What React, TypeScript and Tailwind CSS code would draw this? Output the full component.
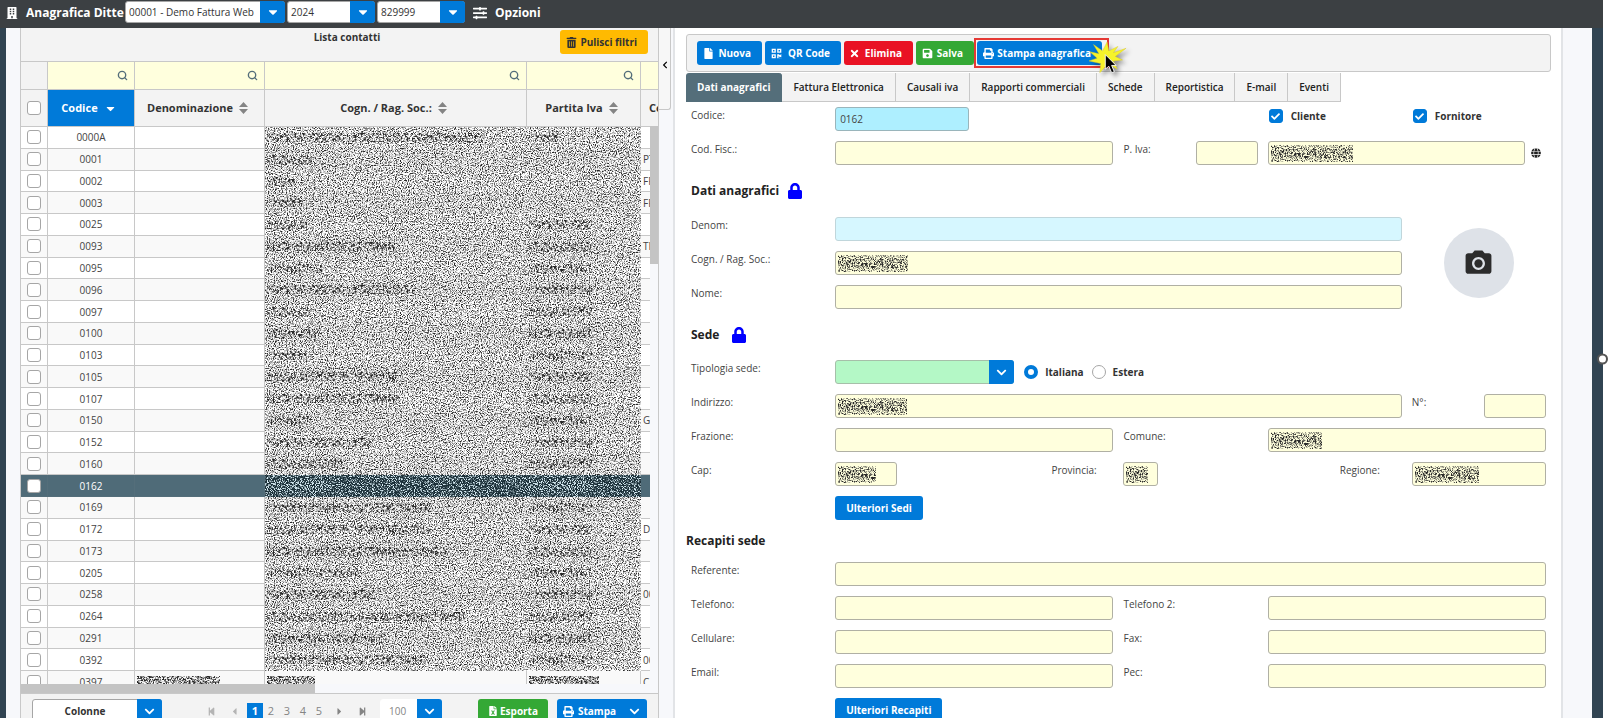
import { useState } from "react";
import type { ReactNode } from "react";
import clsx from "clsx";
import { Search } from "lucide-react";
import {
	FaBuilding,
	FaCaretDown,
	FaCaretLeft,
	FaCaretRight,
	FaCheck,
	FaChevronDown,
	FaChevronLeft,
	FaFile,
	FaFileExcel,
	FaGlobe,
	FaLock,
	FaPrint,
	FaSave,
	FaSlidersH,
	FaStepBackward,
	FaStepForward,
	FaTimes,
	FaTrashAlt,
	FaQrcode,
} from "react-icons/fa";
import { MdPhotoCamera } from "react-icons/md";

type Contact = {
	code: string;
	name: number;
	vat: number;
	extra?: string;
};

// name and vat hold the length of the hidden text
const CONTACTS: Contact[] = [
	{ code: "0000A", name: 215, vat: 30 },
	{ code: "0001", name: 45, vat: 0, extra: "PT" },
	{ code: "0002", name: 28, vat: 0, extra: "FR" },
	{ code: "0003", name: 36, vat: 0, extra: "FR" },
	{ code: "0025", name: 40, vat: 63 },
	{ code: "0093", name: 128, vat: 63, extra: "TN" },
	{ code: "0095", name: 55, vat: 63 },
	{ code: "0096", name: 148, vat: 63 },
	{ code: "0097", name: 43, vat: 63 },
	{ code: "0100", name: 52, vat: 63 },
	{ code: "0103", name: 40, vat: 63 },
	{ code: "0105", name: 130, vat: 63 },
	{ code: "0107", name: 132, vat: 63 },
	{ code: "0150", name: 45, vat: 63, extra: "G" },
	{ code: "0152", name: 104, vat: 63 },
	{ code: "0160", name: 78, vat: 63 },
	{ code: "0162", name: 65, vat: 63 },
	{ code: "0169", name: 165, vat: 63 },
	{ code: "0172", name: 165, vat: 63, extra: "D" },
	{ code: "0173", name: 183, vat: 63 },
	{ code: "0205", name: 95, vat: 63 },
	{ code: "0258", name: 108, vat: 63, extra: "00" },
	{ code: "0264", name: 198, vat: 63 },
	{ code: "0291", name: 120, vat: 63 },
	{ code: "0392", name: 158, vat: 63, extra: "00" },
];

const TABS = [
	"Dati anagrafici",
	"Fattura Elettronica",
	"Causali iva",
	"Rapporti commerciali",
	"Schede",
	"Reportistica",
	"E-mail",
	"Eventi",
];

const SEEDS = [1, 2, 3, 4, 5, 6, 7];

function NoiseFilters() {
	return (
		<svg width="0" height="0" className="absolute" aria-hidden="true">
			<defs>
				{SEEDS.map((seed) => (
					<filter key={seed} id={`grain-${seed}`} x="0" y="0" width="1" height="1" colorInterpolationFilters="sRGB">
						<feTurbulence type="fractalNoise" baseFrequency="0.85" numOctaves="2" seed={seed} />
						<feColorMatrix values="0 0 0 0 0.15  0 0 0 0 0.15  0 0 0 0 0.15  3.6 0 0 0 -1.6" />
					</filter>
				))}
				{SEEDS.map((seed) => (
					<filter key={seed} id={`ink-${seed}`} x="0" y="0" width="1" height="1" colorInterpolationFilters="sRGB">
						<feTurbulence type="fractalNoise" baseFrequency="0.5 0.35" numOctaves="2" seed={seed + 10} />
						<feColorMatrix values="0 0 0 0 0.15  0 0 0 0 0.15  0 0 0 0 0.15  5 0 0 0 -2.55" />
					</filter>
				))}
				<filter id="grain-light" x="0" y="0" width="1" height="1" colorInterpolationFilters="sRGB">
					<feTurbulence type="fractalNoise" baseFrequency="0.85" numOctaves="2" seed="21" />
					<feColorMatrix values="0 0 0 0 0.85  0 0 0 0 0.93  0 0 0 0 0.96  5 0 0 0 -2.35" />
				</filter>
			</defs>
		</svg>
	);
}

function Grain({ seed, ink, light }: { seed: number; ink: number; light?: boolean }) {
	return (
		<svg className="absolute inset-0 h-full w-full" aria-hidden="true">
			<rect width="100%" height="100%" filter={light ? "url(#grain-light)" : `url(#grain-${seed})`} />
			{ink > 0 && <rect x="2" y="6" width={ink} height="9" filter={light ? "url(#grain-light)" : `url(#ink-${seed})`} />}
		</svg>
	);
}

function Tick({ id, label, defaultChecked }: { id: string; label: string; defaultChecked?: boolean }) {
	return (
		<span className="relative flex h-[14px] w-[14px]">
			<input
				id={id}
				type="checkbox"
				aria-label={label}
				defaultChecked={defaultChecked}
				className="peer h-[14px] w-[14px] appearance-none rounded-[3px] border border-[#a6a6a6] bg-white checked:border-[#007ad9] checked:bg-[#007ad9]"
			/>
			<FaCheck size={9} className="pointer-events-none absolute inset-0 m-auto hidden text-white peer-checked:block" />
		</span>
	);
}

function SortIcon() {
	return (
		<svg width="9" height="12" viewBox="0 0 9 12" className="fill-[#848484]" aria-hidden="true">
			<path d="M4.5 0 9 5H0zM4.5 12 0 7h9z" />
		</svg>
	);
}

function TopSelect({ label, value, className }: { label: string; value: string; className: string }) {
	return (
		<div className={clsx("relative h-[22px]", className)}>
			<select
				aria-label={label}
				className="block h-full w-full appearance-none rounded-[3px] border border-[#a6a6a6] bg-white pr-6 pl-[3px] text-[10px] text-[#333333]"
			>
				<option>{value}</option>
			</select>
			<span className="pointer-events-none absolute inset-y-0 right-0 flex w-[25px] items-center justify-center rounded-r-[3px] bg-[#007ad9] text-white">
				<FaCaretDown size={14} />
			</span>
		</div>
	);
}

function PanelSelect({ id, label, value, className, selectClass }: { id?: string; label?: string; value: string; className?: string; selectClass: string }) {
	return (
		<div className={clsx("relative h-6 shrink-0", className)}>
			<select id={id} aria-label={label} className={clsx("block h-full w-full appearance-none rounded-[3px] border pr-6", selectClass)}>
				<option>{value}</option>
			</select>
			<span className="pointer-events-none absolute inset-y-0 right-0 flex w-[25px] items-center justify-center rounded-r-[3px] bg-[#007ad9] text-white">
				<FaChevronDown size={11} />
			</span>
		</div>
	);
}

function ActionButton({ icon, children, className }: { icon: ReactNode; children: ReactNode; className: string }) {
	return (
		<button type="button" className={clsx("flex h-6 shrink-0 items-center justify-between rounded-[3px] text-[10px] font-bold whitespace-nowrap text-white", className)}>
			{icon}
			{children}
		</button>
	);
}

function Label({ htmlFor, children, className }: { htmlFor: string; children: ReactNode; className?: string }) {
	return (
		<label htmlFor={htmlFor} className={clsx("text-[10px] leading-4 text-[#444444]", className ?? "col-span-2")}>
			{children}
		</label>
	);
}

function Field({ id, label, value, hidden, className, tone }: { id: string; label?: string; value?: string; hidden?: number; className: string; tone?: string }) {
	return (
		<div className={clsx("relative h-6", className)}>
			<input
				id={id}
				type="text"
				aria-label={label}
				defaultValue={value}
				className={clsx("block h-full w-full rounded-[3px] border px-1 text-[10px] text-[#444444]", tone ?? "border-[#b0b0a4] bg-[#ffffdd]")}
			/>
			{hidden && (
				<svg width={hidden} height="17" className="absolute top-1 left-[3px]" aria-hidden="true">
					<rect width="100%" height="100%" filter="url(#grain-3)" />
					<rect y="4" width="100%" height="9" filter="url(#ink-3)" />
				</svg>
			)}
		</div>
	);
}

function Heading({ children, lock, className }: { children: ReactNode; lock?: boolean; className: string }) {
	return (
		<h2 className={clsx("col-span-12 flex items-center text-[12px] font-bold text-[#222222]", className)}>
			{children}
			{lock && <FaLock size={16} className="text-[#0000ff]" />}
		</h2>
	);
}

function ContactRow({ contact, index }: { contact: Contact; index: number }) {
	const selected = contact.code === "0162";
	const cell = clsx("border-r border-b p-0", selected ? "border-[#546e7a]" : "border-[#c8c8c8]");
	const hiddenCell = clsx("relative p-0", selected && "bg-[#1b2f38]");

	return (
		<tr className={clsx(selected ? "bg-[#4f6b78] text-white" : index % 2 ? "bg-[#f9f9f9] text-[#444444]" : "bg-white text-[#444444]")}>
			<td className={cell}>
				<div className="flex justify-center">
					<Tick id={`row-${contact.code}`} label={`Seleziona ${contact.code}`} />
				</div>
			</td>
			<td className={clsx(cell, "text-center text-[10px] leading-4")}>{contact.code}</td>
			<td className={cell} />
			<td className={hiddenCell}>
				<Grain seed={(index % 7) + 1} ink={contact.name} light={selected} />
			</td>
			<td className={hiddenCell}>
				<Grain seed={((index + 3) % 7) + 1} ink={contact.vat} light={selected} />
			</td>
			<td className={clsx(cell, "pl-[2px] text-[10px] leading-4")}>{contact.extra}</td>
		</tr>
	);
}

function HiddenText({ width }: { width: number }) {
	return (
		<svg width={width} height="12" className="ml-[2px] block" aria-hidden="true">
			<rect width="100%" height="100%" filter="url(#grain-5)" />
			<rect width="100%" height="100%" filter="url(#ink-5)" />
		</svg>
	);
}

function ContactsPanel() {
	const th = "border-r border-b border-[#c8c8c8] p-0";
	const filters = ["Codice", "Denominazione", "Cognome", "Partita Iva", "Codice fiscale"];

	return (
		<section className="w-[639px] shrink-0 border-x border-[#c8c8c8] bg-[#f3f3f3]">
			<header className="relative flex h-[33px] justify-center pl-[15px]">
				<h2 className="text-[10px] leading-[18px] font-bold text-[#333333]">Lista contatti</h2>
				<button type="button" className="absolute top-[2px] right-[10px] flex h-6 w-[88px] items-center justify-between rounded-[3px] bg-[#ffba01] pr-[11px] pl-[6px] text-[10px] font-bold text-[#333333]">
					<FaTrashAlt size={11} />
					Pulisci filtri
				</button>
			</header>

			<div className="relative overflow-hidden">
				<table className="h-[632px] w-[740px] table-fixed border-separate border-spacing-0 border-t border-[#c8c8c8]">
					<colgroup>
						<col className="w-[27px]" />
						<col className="w-[87px]" />
						<col className="w-[130px]" />
						<col className="w-[262px]" />
						<col className="w-[114px]" />
						<col className="w-[120px]" />
					</colgroup>
					<thead>
						<tr className="h-[28px]">
							<td className={th} />
							{filters.map((name) => (
								<td key={name} className={clsx(th, "bg-[#ffffdd]")}>
									<div className="flex items-center pr-[6px]">
										<input type="text" aria-label={`Filtra ${name}`} className="h-5 min-w-0 flex-1" />
										<Search size={11} strokeWidth={3} className="text-[#546e7a]" />
									</div>
								</td>
							))}
						</tr>
						<tr className="h-[37px] text-[11px] text-[#333333]">
							<th className={th}>
								<div className="flex justify-center">
									<Tick id="row-all" label="Seleziona tutti" />
								</div>
							</th>
							<th className={clsx(th, "bg-[#007ad9] text-white")}>
								<div className="flex items-center justify-center gap-[6px] pr-1">
									Codice
									<FaCaretDown size={13} />
								</div>
							</th>
							<th className={th}>
								<div className="flex items-center justify-center gap-[6px] pr-1">
									Denominazione
									<SortIcon />
								</div>
							</th>
							<th className={th}>
								<div className="flex items-center justify-center gap-[6px] pr-1">
									Cogn. / Rag. Soc.:
									<SortIcon />
								</div>
							</th>
							<th className={th}>
								<div className="flex items-center justify-center gap-[6px] pr-1">
									Partita Iva
									<SortIcon />
								</div>
							</th>
							<th className={clsx(th, "pl-2 text-left")}>Co</th>
						</tr>
					</thead>
					<tbody>
						{CONTACTS.map((contact, i) => (
							<ContactRow key={contact.code} contact={contact} index={i} />
						))}
						<tr className="bg-[#f9f9f9] text-[10px] leading-4 text-[#444444]">
							<td className={th}>
								<div className="flex justify-center">
									<Tick id="row-0397" label="Seleziona 0397" />
								</div>
							</td>
							<td className={clsx(th, "text-center")}>0397</td>
							<td className={th}>
								<HiddenText width={83} />
							</td>
							<td className={th}>
								<HiddenText width={48} />
							</td>
							<td className={th}>
								<HiddenText width={70} />
							</td>
							<td className={clsx(th, "pl-[2px]")}>C</td>
						</tr>
					</tbody>
				</table>

				{/* scrollbars lie over the table */}
				<div className="absolute top-[65px] right-0 bottom-0 w-2 bg-[#f7f8fb]">
					<div className="h-[138px] bg-[#c4c4c4]" />
				</div>
				<div className="absolute inset-x-0 bottom-0 h-[9px] bg-[#f7f8fb]">
					<div className="h-full w-[294px] bg-[#c4c4c4]" />
				</div>
			</div>

			<footer className="flex h-9 items-start border-t border-[#c8c8c8] px-[11px] pt-[5px]">
				<PanelSelect label="Colonne" value="Colonne" className="w-[130px]" selectClass="border-[#a6a6a6] bg-white text-center text-[10px] font-bold text-[#333333]" />
				<nav className="mt-1 ml-[45px] flex h-4 items-center gap-[13px] text-[#848484]" aria-label="Pagine">
					<button type="button" aria-label="Prima pagina" className="text-[#b4b4b4]"><FaStepBackward size={9} /></button>
					<button type="button" aria-label="Pagina precedente" className="text-[#b4b4b4]"><FaCaretLeft size={11} /></button>
					<span className="-mx-[6px] flex text-[11px] leading-4">
						<button type="button" className="w-4 bg-[#007ad9] font-bold text-white">1</button>
						<button type="button" className="w-4">2</button>
						<button type="button" className="w-4">3</button>
						<button type="button" className="w-4">4</button>
						<button type="button" className="w-4">5</button>
					</span>
					<button type="button" aria-label="Pagina successiva"><FaCaretRight size={11} /></button>
					<button type="button" aria-label="Ultima pagina"><FaStepForward size={9} /></button>
				</nav>
				<PanelSelect label="Righe per pagina" value="100" className="ml-auto w-[62px]" selectClass="border-white bg-white pl-2 text-[10px] text-[#848484]" />
				<ActionButton icon={<FaFileExcel size={10} />} className="ml-9 w-[70px] bg-[#34a835] px-[10px]">Esporta</ActionButton>
				<div className="ml-[9px] flex">
					<ActionButton icon={<FaPrint size={11} />} className="w-[65px] rounded-r-none bg-[#007ad9] px-[6px]">Stampa</ActionButton>
					<button type="button" aria-label="Altre stampe" className="flex h-6 w-[25px] items-center justify-center rounded-r-[3px] bg-[#007ad9] text-white">
						<FaChevronDown size={11} />
					</button>
				</div>
			</footer>
		</section>
	);
}

function ClickBurst() {
	return (
		<svg width="38" height="42" viewBox="0 0 42 44" className="pointer-events-none absolute -top-px left-[113px] z-10 drop-shadow-[3px_3px_2px_rgba(0,0,0,0.4)]" aria-hidden="true">
			<path d="M20 2 22 12 32 7 27 14 41 9 29 18 37 22 27 23 31 32 21 26 12 36 13 26 0 23 9 20 1 13 11 15 5 5 15 12z" fill="#f6f32a" stroke="#d9c92a" strokeWidth="0.5" />
			<path d="M18 16v16l4-3 3 7 3-1-3-7h5z" fill="#000" stroke="#fff" strokeWidth="1" />
		</svg>
	);
}

function DetailPanel() {
	const [tab, setTab] = useState<string>(TABS[0]);

	return (
		<main className="min-w-0 flex-1 border-x-2 border-[#e2e4e7] bg-white pt-[6px] pr-[10px] pl-[11px]">
			<div className="flex h-[38px] items-center rounded-[3px] border border-[#c8c8c8] bg-[#f3f3f3] px-[10px]">
				<ActionButton icon={<FaFile size={11} />} className="mr-[3px] w-[65px] bg-[#007ad9] pr-[11px] pl-[6px]">Nuova</ActionButton>
				<ActionButton icon={<FaQrcode size={11} />} className="mr-[3px] w-[76px] bg-[#007ad9] pr-[11px] pl-[6px]">QR Code</ActionButton>
				<ActionButton icon={<FaTimes size={11} />} className="mr-[3px] w-[69px] bg-[#e91224] pr-[11px] pl-[5px]">Elimina</ActionButton>
				<ActionButton icon={<FaSave size={11} />} className="w-[58px] bg-[#34a835] pr-[11px] pl-[6px]">Salva</ActionButton>
				<div className="relative border-2 border-[#e53935] py-px pr-[5px] pl-px">
					<ActionButton icon={<FaPrint size={11} />} className="w-[125px] bg-[#007ad9] pr-[11px] pl-[6px]">Stampa anagrafica</ActionButton>
					<ClickBurst />
				</div>
			</div>

			<div role="tablist" className="mt-px flex h-[29px]">
				{TABS.map((name) => (
					<button
						key={name}
						type="button"
						role="tab"
						aria-selected={tab === name}
						onClick={() => setTab(name)}
						className={clsx(
							"border-r border-b px-[11px] text-[10px] whitespace-nowrap",
							tab === name
								? "rounded-t-[3px] border-[#546e7a] bg-[#546e7a] font-bold text-white"
								: "border-[#c8c8c8] bg-[#f3f3f3] font-semibold text-[#222222]",
						)}
					>
						{name}
					</button>
				))}
			</div>

			<form className="mt-[5px] grid grid-cols-12 items-start gap-[10px] px-[5px]">
				<Label htmlFor="codice">Codice:</Label>
				<Field id="codice" value="0162" className="col-span-2" tone="border-[#9ab5bb] bg-[#aeefff]" />
				<div className="col-span-2 col-start-9 flex items-center gap-2 pt-px pl-px text-[10px] leading-4 font-bold text-[#333333]">
					<Tick id="cliente" label="Cliente" defaultChecked />
					<label htmlFor="cliente">Cliente</label>
				</div>
				<div className="col-span-2 flex items-center gap-2 pt-px pl-px text-[10px] leading-4 font-bold text-[#333333]">
					<Tick id="fornitore" label="Fornitore" defaultChecked />
					<label htmlFor="fornitore">Fornitore</label>
				</div>

				<Label htmlFor="codfisc">Cod. Fisc.:</Label>
				<Field id="codfisc" className="col-span-4" />
				<Label htmlFor="piva" className="col-span-1">P. Iva:</Label>
				<Field id="paese" label="Paese" className="col-span-1" />
				<div className="col-span-4 flex items-center">
					<Field id="piva" hidden={82} className="flex-1" />
					<FaGlobe size={10} className="mr-[5px] ml-[6px] text-[#222222]" />
				</div>

				<Heading lock className="h-8 gap-2">Dati anagrafici</Heading>

				<Label htmlFor="denom">Denom:</Label>
				<Field id="denom" className="col-span-8" tone="border-[#c0d6db] bg-[#d6f7ff]" />
				<div className="col-span-2 row-span-3 flex justify-center self-center">
					<button type="button" aria-label="Carica foto" className="flex h-[70px] w-[70px] items-center justify-center rounded-full bg-[#dee2e8] text-[#2c2c2c]">
						<MdPhotoCamera size={31} />
					</button>
				</div>
				<Label htmlFor="cognome">Cogn. / Rag. Soc.:</Label>
				<Field id="cognome" hidden={70} className="col-span-8" />
				<Label htmlFor="nome">Nome:</Label>
				<Field id="nome" className="col-span-8" />

				<Heading lock className="h-[31px] gap-3">Sede</Heading>

				<Label htmlFor="tipologia">Tipologia sede:</Label>
				<div className="col-span-10 flex items-center text-[10px] font-bold text-[#333333]">
					<PanelSelect id="tipologia" value="" className="mr-[10px] w-[179px]" selectClass="border-[#a6bfa9] bg-[#b4f8c6]" />
					<input id="italiana" name="paese-sede" type="radio" defaultChecked className="h-[14px] w-[14px] appearance-none rounded-full border border-[#a6a6a6] checked:border-4 checked:border-[#007ad9]" />
					<label htmlFor="italiana" className="mr-2 ml-[7px]">Italiana</label>
					<input id="estera" name="paese-sede" type="radio" className="h-[14px] w-[14px] appearance-none rounded-full border border-[#a6a6a6] checked:border-4 checked:border-[#007ad9]" />
					<label htmlFor="estera" className="ml-[7px]">Estera</label>
				</div>

				<Label htmlFor="indirizzo">Indirizzo:</Label>
				<Field id="indirizzo" hidden={69} className="col-span-8" />
				<Label htmlFor="numero" className="col-span-1">N°:</Label>
				<Field id="numero" className="col-span-1" />

				<Label htmlFor="frazione">Frazione:</Label>
				<Field id="frazione" className="col-span-4" />
				<Label htmlFor="comune">Comune:</Label>
				<Field id="comune" hidden={51} className="col-span-4" />

				<Label htmlFor="cap">Cap:</Label>
				<Field id="cap" hidden={38} className="col-span-1" />
				<Label htmlFor="provincia" className="col-span-1 col-start-6">Provincia:</Label>
				<Field id="provincia" hidden={22} className="col-span-1 w-[35px]" />
				<Label htmlFor="regione" className="col-span-1 col-start-10">Regione:</Label>
				<Field id="regione" hidden={64} className="col-span-2" />

				<button type="button" className="col-span-3 col-start-3 h-6 justify-self-start rounded-[3px] bg-[#007ad9] px-[11px] text-[10px] font-bold text-white">
					Ulteriori Sedi
				</button>

				<Heading className="-ml-[5px] h-[22px]">Recapiti sede</Heading>

				<Label htmlFor="referente">Referente:</Label>
				<Field id="referente" className="col-span-10" />
				<Label htmlFor="telefono">Telefono:</Label>
				<Field id="telefono" className="col-span-4" />
				<Label htmlFor="telefono2">Telefono 2:</Label>
				<Field id="telefono2" className="col-span-4" />
				<Label htmlFor="cellulare">Cellulare:</Label>
				<Field id="cellulare" className="col-span-4" />
				<Label htmlFor="fax">Fax:</Label>
				<Field id="fax" className="col-span-4" />
				<Label htmlFor="email">Email:</Label>
				<Field id="email" className="col-span-4" />
				<Label htmlFor="pec">Pec:</Label>
				<Field id="pec" className="col-span-4" />

				<button type="button" className="col-span-3 col-start-3 h-6 justify-self-start rounded-[3px] bg-[#007ad9] px-[11px] text-[10px] font-bold text-white">
					Ulteriori Recapiti
				</button>
			</form>
		</main>
	);
}

export default function App() {
	return (
		<div className="relative flex h-screen flex-col overflow-hidden bg-white pr-2 font-['Open_Sans','Noto_Sans',sans-serif]">
			<NoiseFilters />
			<header className="flex h-7 shrink-0 items-start bg-[#3c4043] pl-[6px] text-white">
				<div className="flex h-[26px] items-center">
					<FaBuilding size={12} />
					<h1 className="w-[107px] pl-2 text-[12px] font-bold whitespace-nowrap">Anagrafica Ditte</h1>
				</div>
				<div className="flex gap-[2px] pt-px">
					<TopSelect label="Ditta" value="00001 - Demo Fattura Web" className="w-[160px]" />
					<TopSelect label="Anno" value="2024" className="w-[88px]" />
					<TopSelect label="Numero" value="829999" className="w-[88px]" />
				</div>
				<button type="button" className="ml-2 flex h-[26px] items-center gap-2 text-[12px] font-bold">
					<FaSlidersH size={14} />
					Opzioni
				</button>
			</header>

			<div className="flex min-h-0 flex-1 border-x-[#314452] border-r-[11px] border-l-[6px] bg-[#f7f8fb] pr-[29px] pl-[14px]">
				<ContactsPanel />
				<div className="w-[14px] shrink-0">
					<button type="button" aria-label="Chiudi lista" className="flex h-[82px] w-3 items-center justify-center rounded-br-[3px] border-r border-b border-[#c8c8c8] bg-[#f7f7f7] pb-2 text-black">
						<FaChevronLeft size={8} />
					</button>
				</div>
				<DetailPanel />
			</div>

			<span className="absolute top-1/2 right-[3px] h-[11px] w-[11px] -translate-y-1/2 rounded-full border-2 border-[#555555] bg-white" />
		</div>
	);
}
